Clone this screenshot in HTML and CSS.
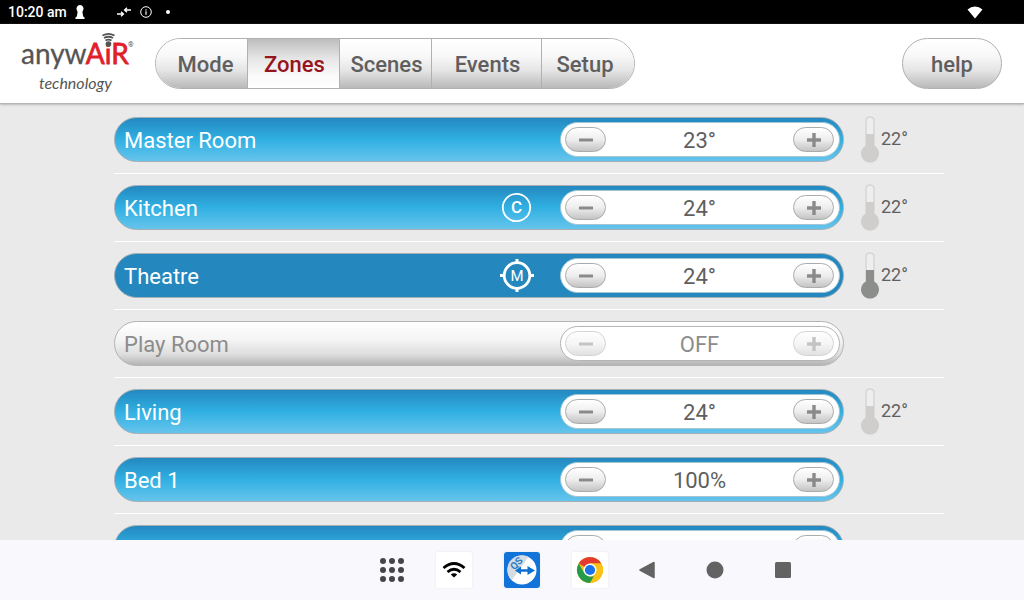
FILE: index.html
```html
<!DOCTYPE html>
<html lang="en">
<head>
    <meta charset="UTF-8">
    <meta name="viewport" content="width=device-width, initial-scale=1">
    <title>anywAiR technology - Zones</title>
    <link rel="stylesheet" href="styles.css">
</head>
<body>
    <!-- shared icons -->
    <svg class="symbols" aria-hidden="true">
        <symbol id="minus" viewBox="0 0 14 14"><path d="M0 5.500h14v3H0z"/></symbol>
        <symbol id="plus" viewBox="0 0 14 14"><path d="M5.300 0h3.400v5.200H14v3.600H8.700V14H5.300V8.800H0V5.200h5.300z"/></symbol>
        <symbol id="thermo" viewBox="0 0 19 46">
            <path class="tube" d="M5 30V4q0-4 4-4t4 4v25" stroke-width="1.500"/>
            <path d="M5 17h8v11.500a9 9 0 1 1-8 0z"/>
        </symbol>
    </svg>

    <div class="statusbar">
        <span class="clock">10:20 am</span>
        <svg class="pawn" width="10" height="16" viewBox="0 0 10 16"><path d="M5 1a3.700 3.700 0 0 1 2.800 6L7.400 8l.8 4.500 1.300 1V15h-9v-1.500l1.300-1L2.600 8l-.4-1A3.700 3.700 0 0 1 5 1z" fill="#fff"/></svg>
        <svg width="14" height="12" viewBox="0 0 14 12" fill="none" stroke="#fff" stroke-width="1.300"><path d="M0 8h6M4 5.700L6.500 8 4 10.300M14 4H8M10 1.700L7.500 4 10 6.300"/></svg>
        <svg class="info" width="12" height="12" viewBox="0 0 12 12"><circle cx="6" cy="6" r="5.300" fill="none" stroke="#fff"/><path d="M5.400 5.200h1.200v3.600H5.400zM5.400 3.200h1.200v1.200H5.400z" fill="#fff"/></svg>
        <span class="dot"></span>
        <svg class="signal" width="16" height="13" viewBox="0 0 16 13"><path d="M8 12.500L.5 3.500Q4 .5 8 .5t7.500 3z" fill="#fff"/></svg>
    </div>

    <header class="header">
        <svg class="logo" width="114" height="64" viewBox="0 0 114 64" role="img" aria-label="anywAiR technology">
            <text class="logo-name" x="1" y="32">anyw<tspan class="logo-air">AiR</tspan></text>
            <circle cx="88.500" cy="12" r="2.800" fill="#555"/>
            <g fill="none" stroke="#555" stroke-width="1.800">
                <path d="M85.500 8.500q3-1.800 6 0M84 6q4.500-2.500 9 0M82.500 3.500q6-3.300 12 0"/>
            </g>
            <text class="logo-reg" x="108" y="15">®</text>
            <text class="logo-tech" x="19" y="57">technology</text>
        </svg>
        <nav class="tabs">
            <button class="tab tab-first">Mode</button>
            <button class="tab active">Zones</button>
            <button class="tab">Scenes</button>
            <button class="tab tab-wide">Events</button>
            <button class="tab tab-last">Setup</button>
        </nav>
        <button class="help">help</button>
    </header>

    <main class="zones">
        <div class="zone">
            <div class="bar">
                <button class="name">Master Room</button>
                <div class="stepper">
                    <button class="step" aria-label="Decrease"><svg><use href="#minus"/></svg></button>
                    <output>23°</output>
                    <button class="step" aria-label="Increase"><svg><use href="#plus"/></svg></button>
                </div>
            </div>
            <div class="temp"><svg><use href="#thermo"/></svg><span>22°</span></div>
        </div>
        <div class="zone">
            <div class="bar">
                <button class="name">Kitchen</button>
                <svg class="badge" width="34" height="34" viewBox="0 0 34 34">
                    <circle cx="16.500" cy="16.500" r="13.700" stroke-width="1.800"/>
                    <text class="badge-c" x="16.500" y="22">C</text>
                </svg>
                <div class="stepper">
                    <button class="step" aria-label="Decrease"><svg><use href="#minus"/></svg></button>
                    <output>24°</output>
                    <button class="step" aria-label="Increase"><svg><use href="#plus"/></svg></button>
                </div>
            </div>
            <div class="temp"><svg><use href="#thermo"/></svg><span>22°</span></div>
        </div>
        <div class="zone">
            <div class="bar flat">
                <button class="name">Theatre</button>
                <svg class="badge" width="34" height="34" viewBox="0 0 34 34">
                    <circle cx="17" cy="16.500" r="12.800" stroke-width="2.800"/>
                    <path d="M17 0v5M17 28v5M0 16.500h5M29 16.500h5" stroke-width="3"/>
                    <text x="17" y="21.500">M</text>
                </svg>
                <div class="stepper">
                    <button class="step" aria-label="Decrease"><svg><use href="#minus"/></svg></button>
                    <output>24°</output>
                    <button class="step" aria-label="Increase"><svg><use href="#plus"/></svg></button>
                </div>
            </div>
            <div class="temp on"><svg><use href="#thermo"/></svg><span>22°</span></div>
        </div>
        <div class="zone">
            <div class="bar off">
                <button class="name">Play Room</button>
                <div class="stepper">
                    <button class="step" aria-label="Decrease"><svg><use href="#minus"/></svg></button>
                    <output>OFF</output>
                    <button class="step" aria-label="Increase"><svg><use href="#plus"/></svg></button>
                </div>
            </div>
        </div>
        <div class="zone">
            <div class="bar">
                <button class="name">Living</button>
                <div class="stepper">
                    <button class="step" aria-label="Decrease"><svg><use href="#minus"/></svg></button>
                    <output>24°</output>
                    <button class="step" aria-label="Increase"><svg><use href="#plus"/></svg></button>
                </div>
            </div>
            <div class="temp"><svg><use href="#thermo"/></svg><span>22°</span></div>
        </div>
        <div class="zone">
            <div class="bar">
                <button class="name">Bed 1</button>
                <div class="stepper">
                    <button class="step" aria-label="Decrease"><svg><use href="#minus"/></svg></button>
                    <output>100%</output>
                    <button class="step" aria-label="Increase"><svg><use href="#plus"/></svg></button>
                </div>
            </div>
        </div>
        <div class="zone">
            <div class="bar">
                <button class="name">Bed 2</button>
                <div class="stepper">
                    <button class="step" aria-label="Decrease"><svg><use href="#minus"/></svg></button>
                    <output>100%</output>
                    <button class="step" aria-label="Increase"><svg><use href="#plus"/></svg></button>
                </div>
            </div>
        </div>
    </main>

    <nav class="taskbar">
        <div class="apps">
            <button class="all" aria-label="All apps">
                <svg width="24" height="24" viewBox="0 0 24 24" fill="#45454a">
                    <circle cx="3" cy="3" r="3"/><circle cx="12" cy="3" r="3"/><circle cx="21" cy="3" r="3"/>
                    <circle cx="3" cy="12" r="3"/><circle cx="12" cy="12" r="3"/><circle cx="21" cy="12" r="3"/>
                    <circle cx="3" cy="21" r="3"/><circle cx="12" cy="21" r="3"/><circle cx="21" cy="21" r="3"/>
                </svg>
            </button>
            <button class="app" aria-label="Wi-Fi">
                <svg width="24" height="20" viewBox="0 0 24 20">
                    <g fill="none" stroke="#000" stroke-width="2.800">
                        <path d="M1.500 8Q12-1 22.500 8M5.500 12Q12 6.500 18.500 12"/>
                    </g>
                    <path d="M12 17.500l-3.200-3q3.200-2.300 6.400 0z"/>
                </svg>
            </button>
            <button class="app" aria-label="QuickSupport">
                <svg width="36" height="36" viewBox="0 0 36 36">
                    <rect width="36" height="36" rx="3" fill="#1273d8"/>
                    <circle cx="18" cy="18" r="14.500" fill="#fff"/>
                    <path d="M7.700 28.300A14.500 14.500 0 0 1 24.500 5z" fill="#d5dce2"/>
                    <path d="M11 18.500l6-4v2.700h6.500V14l7.500 4.500-7.500 4.500v-3.200H17v2.700z" fill="#0f6fd0"/>
                    <text class="qs" transform="rotate(-45 12 11)" x="12" y="15">QS</text>
                </svg>
            </button>
            <button class="app" aria-label="Chrome">
                <svg width="26" height="26" viewBox="0 0 26 26">
                    <circle cx="13" cy="13" r="13" fill="#fbc116"/>
                    <path d="M13 13L1.740 6.500A13 13 0 0 1 24.260 6.500H13z" fill="#e33b2e"/>
                    <path d="M1.740 6.500L7.400 16.250 13 19.500h5.600L13 26A13 13 0 0 1 1.740 6.500z" fill="#259a49"/>
                    <path d="M18.630 16.250L13 26a13 13 0 0 0 11.260-19.500H13z" fill="#fbc116"/>
                    <circle cx="13" cy="13" r="6.500" fill="#fff"/>
                    <circle cx="13" cy="13" r="5.100" fill="#1a73e8"/>
                </svg>
            </button>
        </div>
        <div class="system">
            <button aria-label="Back"><svg width="18" height="18" viewBox="0 0 18 18"><path d="M16 1.500v15L2 9z" fill="#636363" stroke="#636363" stroke-width="1.500" stroke-linejoin="round"/></svg></button>
            <button aria-label="Home"><svg width="18" height="18" viewBox="0 0 18 18"><circle cx="9" cy="9" r="8.500" fill="#636363"/></svg></button>
            <button aria-label="Recents"><svg width="18" height="18" viewBox="0 0 18 18"><rect x="1" y="1" width="16" height="16" rx="1.500" fill="#636363"/></svg></button>
        </div>
    </nav>
</body>
</html>
```
FILE: styles.css
```css
* { box-sizing: border-box; }
body { margin: 0; height: 100vh; display: flex; flex-direction: column; overflow: hidden; background: #eaeaea; color: #5f5f5f; font-family: Roboto, Arial, sans-serif; font-size: 22px; }
button { margin: 0; padding: 0; border: none; background: none; color: inherit; font: inherit; cursor: pointer; }
svg { display: block; flex: none; overflow: visible; }
.symbols { position: absolute; width: 0; height: 0; }
symbol { overflow: visible; }

/* android status bar */
.statusbar { flex: none; display: flex; align-items: center; height: 24px; padding: 0 41px 0 8px; background: #000; color: #fff; font-size: 14px; font-weight: 500; }
.pawn { margin: 0 32px 0 8px; }
.info { margin-left: 9px; }
.dot { width: 4px; height: 4px; margin-left: 14px; border-radius: 50%; background: #fff; }
.signal { margin-left: auto; }

/* header */
.header { flex: none; position: relative; display: flex; align-items: center; height: 80px; padding: 0 22px 0 20px; background: #fff; border-bottom: 1px solid #b5b5b5; box-shadow: 0 1px 2px #bbb; }
.logo { margin-right: 21px; }
.logo-name { font-family: Lato, sans-serif; font-size: 28px; fill: #555; stroke: #555; stroke-width: 0.3px; }
.logo-air { fill: #e01f2d; stroke: #e01f2d; stroke-width: 0.8px; }
.logo-reg { font-size: 7px; fill: #555; }
.logo-tech { font-family: Lato, sans-serif; font-size: 16px; font-style: italic; fill: #555; }
.tabs { display: flex; height: 51px; border: 1px solid #b0b0b0; border-radius: 26px; overflow: hidden; }
.tab, .help { padding-top: 2px; font-weight: 500; background: linear-gradient(#fff 0%, #f8f8f8 35%, #e4e4e4 65%, #b9b9b9 100%); }
.tab { width: 92px; padding-left: 2px; border-right: 1px solid #b0b0b0; }
.tab-first { padding-left: 8px; }
.tab-wide { width: 110px; }
.tab-last { padding-right: 8px; border-right: none; }
.tab.active { color: #97141f; background: linear-gradient(#bdbdbd 0%, #e6e6e6 40%, #fafafa 75%, #fff 100%); }
.help { width: 100px; height: 51px; margin-left: auto; border: 1px solid #b0b0b0; border-radius: 26px; }

/* zone list */
.zones { flex: 1; min-height: 0; overflow: hidden; padding: 2px 80px 0 114px; }
.zone { display: flex; align-items: center; height: 68px; border-bottom: 1px solid #fff; }
.bar { flex: 1; max-width: 730px; display: flex; align-items: center; height: 45px; padding-right: 3px; border: 1px solid #a3afb5; border-radius: 23px; background: linear-gradient(#2488bf 0%, #30b0e2 50%, #66c4ec 100%); color: #fff; }
.bar.flat { background: #2488bf; }
.bar.off { background: linear-gradient(#fff 0%, #f5f5f5 40%, #dedede 75%, #b4b4b4 100%); border-color: #b4b4b4; color: #8c8c8c; }
.name { flex: 1; height: 100%; padding: 2px 0 0 9px; text-align: left; }
.badge { margin-right: 26px; fill: none; stroke: #fff; }
.badge text { fill: #fff; stroke: none; font-size: 15px; text-anchor: middle; }
.badge .badge-c { font-size: 17px; font-weight: 500; }
.stepper { display: flex; align-items: center; width: 280px; height: 35px; padding: 0 5px 0 4px; border: 1px solid #a3c4d4; border-radius: 18px; background: #fff; color: #5f5f5f; }
.stepper output { flex: 1; padding-top: 2px; text-align: center; }
.step { display: flex; align-items: center; justify-content: center; width: 41px; height: 25px; border: 1px solid #ababab; border-radius: 13px; background: linear-gradient(#fff, #eee 50%, #c4c4c4); }
.step svg { width: 14px; height: 14px; fill: #8a8a8a; }
.off .stepper { border-color: #b4b4b4; color: #8c8c8c; }
.off .step { opacity: 0.5; }
.temp { display: flex; align-items: center; margin-left: 17px; font-size: 18px; }
.temp svg { width: 19px; height: 46px; margin-right: 1px; fill: #d0cecd; }
.temp span { padding-bottom: 2px; }
.tube { stroke: #d8d6d5; fill: #eee; }
.temp.on svg { fill: #8c8e8c; }
.temp.on .tube { stroke: #a4a5a4; }

/* android task bar */
.taskbar { flex: none; position: relative; display: flex; align-items: center; justify-content: center; gap: 30px; height: 60px; padding-left: 148px; background: #f9f8fd; }
.apps { display: flex; align-items: center; gap: 32px; }
.system { display: flex; align-items: center; gap: 50px; }
.app { display: flex; align-items: center; justify-content: center; width: 36px; height: 36px; border-radius: 2px; background: #fff; box-shadow: 0 0 2px #e4e4e4; }
.qs { font-size: 10px; font-weight: 700; fill: #2a7fcb; text-anchor: middle; }
```
